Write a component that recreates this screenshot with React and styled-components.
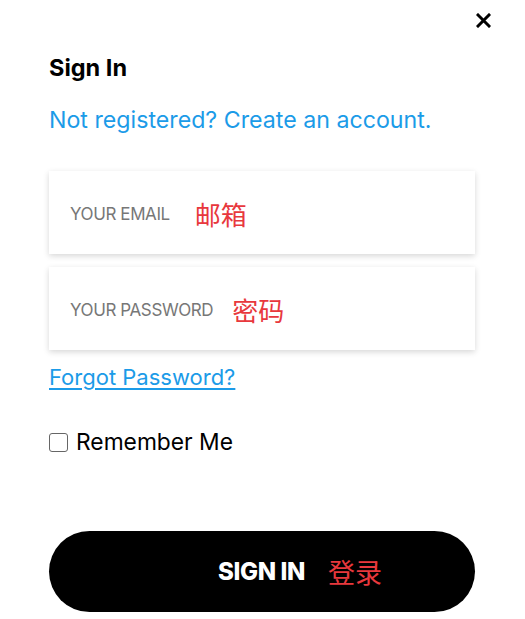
import React, { useState } from 'react';
import styled, { createGlobalStyle } from 'styled-components';

const GlobalStyle = createGlobalStyle`
  *, *::before, *::after {
    box-sizing: border-box;
  }
  html, body {
    margin: 0;
    padding: 0;
    background: #ffffff;
  }
  body {
    font-family: Inter, "Noto Sans", "Noto Sans CJK SC", sans-serif;
  }
`;

const App = () => {
  const [remember, setRemember] = useState(false);

  return (
    <Page>
      <GlobalStyle />
      <TopBar>
        <CloseButton aria-label="Close">
          <svg width="15" height="15" viewBox="0 0 15 15">
            <path d="M2 2 L13 13 M13 2 L2 13" stroke="#000" strokeWidth="3" strokeLinecap="square" />
          </svg>
        </CloseButton>
      </TopBar>
      <Form>
        <Title>Sign In</Title>
        <LinkText href="#">Not registered? Create an account.</LinkText>
        <Fields>
          <Field>
            <Label>YOUR EMAIL</Label>
            <Note size="26px" offset="25px">邮箱</Note>
          </Field>
          <Field>
            <Label>YOUR PASSWORD</Label>
            <Note size="26px" offset="19px">密码</Note>
          </Field>
        </Fields>
        <Forgot href="#">Forgot Password?</Forgot>
        <CheckRow>
          <Check
            type="checkbox"
            checked={remember}
            onChange={(e) => setRemember(e.target.checked)}
          />
          Remember Me
        </CheckRow>
        <SubmitButton>
          <ButtonLabel>SIGN IN</ButtonLabel>
          <Note size="27px" offset="23px">登录</Note>
        </SubmitButton>
      </Form>
    </Page>
  );
};

export default App;

const Page = styled.div`
  width: 525px;
  min-height: 619px;
  background: #fff;
`;

const TopBar = styled.div`
  height: 40px;
  display: flex;
  justify-content: flex-end;
  align-items: center;
  padding-right: 34px;
`;

const CloseButton = styled.button`
  background: none;
  border: none;
  padding: 0;
  width: 15px;
  height: 15px;
  display: flex;
  cursor: pointer;
`;

const Form = styled.div`
  width: 426px;
  margin-left: 49px;
  display: flex;
  flex-direction: column;
  align-items: flex-start;
`;

const Title = styled.h1`
  margin: 14px 0 0;
  font-size: 23.5px;
  line-height: 28px;
  font-weight: 700;
  color: #000;
`;

const LinkText = styled.a`
  margin-top: 24px;
  font-size: 23.2px;
  line-height: 28px;
  color: #1b9be8;
  text-decoration: none;
`;

const Fields = styled.div`
  margin-top: 37px;
  width: 100%;
  display: flex;
  flex-direction: column;
  gap: 13px;
`;

const Field = styled.div`
  height: 83px;
  display: flex;
  align-items: center;
  padding: 2px 0 0 21px;
  background: #fff;
  box-shadow: 0 2px 6px rgba(0, 0, 0, 0.16);
`;

const Label = styled.span`
  font-size: 17px;
  color: #777;
  letter-spacing: -0.4px;
`;

const Note = styled.span`
  margin-left: ${(p) => p.offset};
  font-family: "Noto Sans CJK SC", sans-serif;
  font-size: ${(p) => p.size};
  color: #e8383d;
`;

const Forgot = styled.a`
  margin-top: 13px;
  font-size: 22px;
  line-height: 28px;
  color: #1b9be8;
  text-decoration: underline;
  text-underline-offset: 3px;
`;

const CheckRow = styled.label`
  margin-top: 37px;
  display: flex;
  align-items: center;
  gap: 8px;
  font-size: 22.8px;
  line-height: 28px;
  color: #000;
`;

const Check = styled.input`
  appearance: none;
  margin: 0;
  width: 19px;
  height: 19px;
  border: 1px solid #666;
  border-radius: 3px;
  background: #fff;
`;

const SubmitButton = styled.button`
  margin-top: 75px;
  width: 100%;
  height: 81px;
  border: none;
  border-radius: 41px;
  background: #000;
  display: flex;
  align-items: center;
  justify-content: center;
  padding-left: 82px;
  cursor: pointer;
`;

const ButtonLabel = styled.span`
  font-family: Inter, sans-serif;
  font-size: 24px;
  font-weight: 800;
  color: #fff;
  letter-spacing: -0.4px;
`;
